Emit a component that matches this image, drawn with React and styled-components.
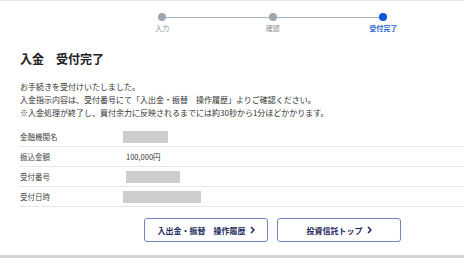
import styled, { createGlobalStyle } from "styled-components";

const GlobalStyle = createGlobalStyle`
  body {
    margin: 0;
    background: #fff;
    font-family: "Noto Sans CJK JP", "Noto Sans", sans-serif;
    color: #333;
  }
`;

const Page = styled.div`
  width: 464px;
  height: 258px;
  box-sizing: border-box;
  border-top: 1px solid #e3e7ee;
  display: flex;
  flex-direction: column;
  overflow: hidden;
`;

const Stepper = styled.div`
  display: grid;
  grid-template-columns: repeat(3, 110.5px);
  margin: 12px 0 0 107px;
`;

const Step = styled.div`
  position: relative;
  display: flex;
  flex-direction: column;
  align-items: center;

  &:not(:first-child)::before {
    content: "";
    position: absolute;
    top: 3.5px;
    left: -50%;
    width: 100%;
    height: 1px;
    background: #aab2be;
  }
`;

const Dot = styled.span`
  position: relative;
  z-index: 1;
  width: 8px;
  height: 8px;
  border-radius: 50%;
  background: ${(p) => (p.$active ? "#0a56d6" : "#9ea6b2")};
`;

const StepLabel = styled.span`
  margin-top: 3px;
  font-size: 7px;
  line-height: 9px;
  white-space: nowrap;
  font-weight: ${(p) => (p.$active ? 700 : 400)};
  color: ${(p) => (p.$active ? "#1d5fcf" : "#8a8f96")};
`;

const Title = styled.h1`
  margin: 18px 0 0 20px;
  font-size: 12px;
  line-height: 16px;
  font-weight: 700;
  color: #222;
`;

const Message = styled.div`
  margin: 13px 0 0 20px;
  font-size: 8px;
  line-height: 13px;
  color: #333;
`;

const Table = styled.div`
  margin: 8px 0 0 19px;
`;

const Row = styled.div`
  display: grid;
  grid-template-columns: 104px 1fr;
  align-items: center;
  height: 20px;
  box-sizing: border-box;
  border-bottom: 1.5px solid #e4e8ee;
`;

const Label = styled.div`
  padding-left: 1px;
  font-size: 7.5px;
  color: #444;
`;

const Value = styled.div`
  margin-left: ${(p) => p.$offset || 0}px;
  font-size: 7.5px;
  color: #333;
`;

const Masked = styled.div`
  margin-left: ${(p) => p.$offset || 0}px;
  width: ${(p) => p.$w}px;
  height: 12px;
  background: #cdcdcd;
`;

const Actions = styled.div`
  display: flex;
  gap: 9px;
  margin: 11px 0 0 144px;
`;

const ActionButton = styled.button`
  width: 124px;
  height: 24px;
  box-sizing: border-box;
  border: 1px solid #7385c0;
  border-radius: 3px;
  background: #fff;
  display: flex;
  align-items: center;
  justify-content: center;
  gap: 4px;
  font-family: inherit;
  font-size: 8px;
  font-weight: 700;
  color: #1c2a5c;
  padding: 0;
`;

const BottomBar = styled.div`
  margin-top: auto;
  height: 3px;
  background: #d4d4d4;
`;

function Chevron() {
  return (
    <svg width="5" height="8" viewBox="0 0 5 8">
      <path d="M1 1l3 3-3 3" fill="none" stroke="#1c2a5c" strokeWidth="1.5" />
    </svg>
  );
}

const steps = [
  { label: "入力" },
  { label: "確認" },
  { label: "受付完了", active: true },
];

export default function App() {
  return (
    <>
      <GlobalStyle />
      <Page>
        <Stepper>
          {steps.map((s) => (
            <Step key={s.label}>
              <Dot $active={s.active} />
              <StepLabel $active={s.active}>{s.label}</StepLabel>
            </Step>
          ))}
        </Stepper>

        <Title>入金　受付完了</Title>

        <Message>
          お手続きを受付けいたしました。
          <br />
          入金指示内容は、受付番号にて「入出金・振替　操作履歴」よりご確認ください。
          <br />
          ※入金処理が終了し、買付余力に反映されるまでには約30秒から1分ほどかかります。
        </Message>

        <Table>
          <Row>
            <Label>金融機関名</Label>
            <Masked $w={45} />
          </Row>
          <Row>
            <Label>振込金額</Label>
            <Value $offset={3}>100,000円</Value>
          </Row>
          <Row>
            <Label>受付番号</Label>
            <Masked $w={54} $offset={3} />
          </Row>
          <Row>
            <Label>受付日時</Label>
            <Masked $w={78} />
          </Row>
        </Table>

        <Actions>
          <ActionButton>
            入出金・振替　操作履歴
            <Chevron />
          </ActionButton>
          <ActionButton>
            投資信託トップ
            <Chevron />
          </ActionButton>
        </Actions>

        <BottomBar />
      </Page>
    </>
  );
}
